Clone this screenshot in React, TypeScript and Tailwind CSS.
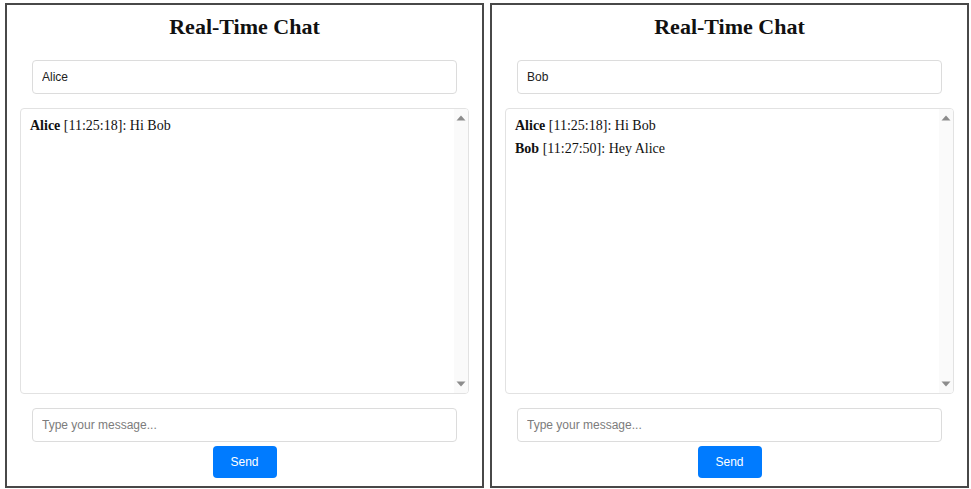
type Message = { sender: string; time: string; text: string };

const ALICE_MESSAGES: Message[] = [{ sender: "Alice", time: "11:25:18", text: "Hi Bob" }];
const BOB_MESSAGES: Message[] = [
  ...ALICE_MESSAGES,
  { sender: "Bob", time: "11:27:50", text: "Hey Alice" },
];

const FIELD =
  "mx-3 h-[34px] shrink-0 rounded border border-[#dcdcdc] bg-white px-[9px] font-['Liberation_Sans',Arial,sans-serif] text-[12px] text-[#222] placeholder:text-[#7c7c7c] outline-none";

function ScrollTrack() {
  return (
    <div className="flex w-[14px] shrink-0 flex-col items-center justify-between bg-[#fafafa] py-[6px]" aria-hidden="true">
      <svg width="10" height="6" viewBox="0 0 10 6" fill="#8c8c8c">
        <path d="M5 0.5 L9.5 5.5 H0.5 Z" />
      </svg>
      <svg width="10" height="6" viewBox="0 0 10 6" fill="#8c8c8c">
        <path d="M0.5 0.5 H9.5 L5 5.5 Z" />
      </svg>
    </div>
  );
}

function ChatWindow({ user, messages }: { user: string; messages: Message[] }) {
  return (
    <section className="flex min-w-0 flex-1 flex-col border-2 border-[#484848] bg-white px-[13px] pt-2 pb-2">
      <h2 className="text-center text-[22px] leading-7 font-bold">Real-Time Chat</h2>
      <input aria-label="Your name" defaultValue={user} className={`${FIELD} mt-[19px]`} />
      <div className="mt-[14px] flex flex-1 overflow-hidden rounded border border-[#e2e2e2]">
        <ul className="flex-1 px-[9px] py-[5px] text-[14px] leading-[23px]">
          {messages.map((m) => (
            <li key={m.time}>
              <strong>{m.sender}</strong> [{m.time}]: {m.text}
            </li>
          ))}
        </ul>
        <ScrollTrack />
      </div>
      <input aria-label="Message" placeholder="Type your message..." className={`${FIELD} mt-[14px]`} />
      <button
        type="button"
        className="mt-1 h-8 w-16 shrink-0 self-center rounded bg-[#007bff] font-['Liberation_Sans',Arial,sans-serif] text-[12px] text-white"
      >
        Send
      </button>
    </section>
  );
}

export default function App() {
  return (
    <main className="flex min-h-screen gap-[6px] bg-white pt-[3px] pr-[2px] pb-px pl-[5px] font-['Liberation_Serif','Times_New_Roman',serif] text-[#111]">
      <ChatWindow user="Alice" messages={ALICE_MESSAGES} />
      <ChatWindow user="Bob" messages={BOB_MESSAGES} />
    </main>
  );
}
